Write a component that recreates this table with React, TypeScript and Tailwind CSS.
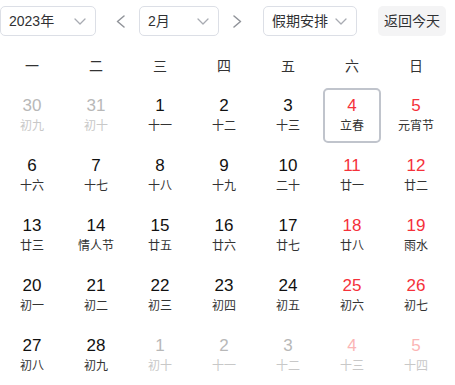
interface Day {
  n: number;
  lunar: string;
  other?: boolean;
}

const days: Day[] = [
  { n: 30, lunar: "初九", other: true },
  { n: 31, lunar: "初十", other: true },
  { n: 1, lunar: "十一" },
  { n: 2, lunar: "十二" },
  { n: 3, lunar: "十三" },
  { n: 4, lunar: "立春" },
  { n: 5, lunar: "元宵节" },
  { n: 6, lunar: "十六" },
  { n: 7, lunar: "十七" },
  { n: 8, lunar: "十八" },
  { n: 9, lunar: "十九" },
  { n: 10, lunar: "二十" },
  { n: 11, lunar: "廿一" },
  { n: 12, lunar: "廿二" },
  { n: 13, lunar: "廿三" },
  { n: 14, lunar: "情人节" },
  { n: 15, lunar: "廿五" },
  { n: 16, lunar: "廿六" },
  { n: 17, lunar: "廿七" },
  { n: 18, lunar: "廿八" },
  { n: 19, lunar: "雨水" },
  { n: 20, lunar: "初一" },
  { n: 21, lunar: "初二" },
  { n: 22, lunar: "初三" },
  { n: 23, lunar: "初四" },
  { n: 24, lunar: "初五" },
  { n: 25, lunar: "初六" },
  { n: 26, lunar: "初七" },
  { n: 27, lunar: "初八" },
  { n: 28, lunar: "初九" },
  { n: 1, lunar: "初十", other: true },
  { n: 2, lunar: "十一", other: true },
  { n: 3, lunar: "十二", other: true },
  { n: 4, lunar: "十三", other: true },
  { n: 5, lunar: "十四", other: true },
];

const weekdays = ["一", "二", "三", "四", "五", "六", "日"];

function CaretDown() {
  return (
    <svg width="12" height="7" viewBox="0 0 12 7" fill="none" stroke="#a8abb2" strokeWidth="1.3" strokeLinecap="round" strokeLinejoin="round">
      <path d="M1 1l5 5 5-5" />
    </svg>
  );
}

function Arrow({ dir }: { dir: "left" | "right" }) {
  return (
    <svg width="9" height="13" viewBox="0 0 9 13" fill="none" stroke="#909399" strokeWidth="1.5" strokeLinecap="round" strokeLinejoin="round">
      <path d={dir === "left" ? "M8 1L1.5 6.5 8 12" : "M1 1l6.5 5.5L1 12"} />
    </svg>
  );
}

function Select({ label, width }: { label: string; width: string }) {
  return (
    <div
      className={`${width} h-[30px] flex items-center justify-between pl-[8px] pr-[9px] border border-[#dcdfe6] rounded-[5px] bg-white text-[14px] text-[#303133]`}
    >
      <span>{label}</span>
      <CaretDown />
    </div>
  );
}

export default function App() {
  return (
    <div
      className="w-[455px] h-[385px] bg-white overflow-hidden"
      style={{ fontFamily: '"Liberation Sans", "Noto Sans CJK SC", sans-serif' }}
    >
      {/* Toolbar */}
      <div className="flex items-center pt-[6px]">
        <Select label="2023年" width="w-[96px]" />
        <div className="ml-[20px]">
          <Arrow dir="left" />
        </div>
        <div className="ml-[14px]">
          <Select label="2月" width="w-[80px]" />
        </div>
        <div className="ml-[14px]">
          <Arrow dir="right" />
        </div>
        <div className="ml-[21px]">
          <Select label="假期安排" width="w-[94px]" />
        </div>
        <button className="ml-[21px] w-[68px] h-[30px] rounded-[5px] bg-[#f4f4f5] text-[14px] text-[#303133]">
          返回今天
        </button>
      </div>

      {/* Weekday header */}
      <div className="grid grid-cols-[repeat(7,64px)] mt-[11px] h-[38px] items-center">
        {weekdays.map((w) => (
          <div key={w} className="text-center text-[14px] text-[#333]">
            {w}
          </div>
        ))}
      </div>

      {/* Days */}
      <div className="grid grid-cols-[repeat(7,64px)] grid-rows-[repeat(5,60px)]">
        {days.map((d, i) => {
          const weekend = i % 7 >= 5;
          const today = !d.other && d.n === 4;
          const numColor = d.other
            ? weekend
              ? "text-[#fbb5b5]"
              : "text-[#b8b8b8]"
            : weekend
              ? "text-[#f5313a]"
              : "text-[#111]";
          const lunarColor = d.other ? "text-[#c8c8c8]" : "text-[#333]";
          return (
            <div key={i} className="flex items-center justify-center">
              <div
                className={`w-[58px] h-[55px] flex flex-col items-center justify-center rounded-[5px] border-2 ${
                  today ? "border-[#c0c4cc]" : "border-transparent"
                }`}
              >
                <span className={`text-[17px] leading-[20px] ${numColor}`}>{d.n}</span>
                <span className={`text-[12px] leading-[16px] mt-[2px] ${lunarColor}`}>{d.lunar}</span>
              </div>
            </div>
          );
        })}
      </div>
    </div>
  );
}
